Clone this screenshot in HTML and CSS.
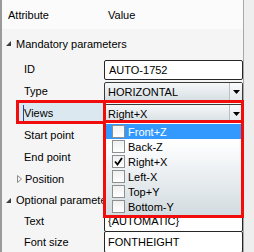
FILE: index.html
```html
<!DOCTYPE html>
<html>
<head>
<meta charset="utf-8">
<link rel="stylesheet" href="styles.css">
</head>
<body>
<div class="grid">
  <div class="hdr"><div class="hc1">Attribute</div><div class="hc2">Value</div></div>
  <div class="group g1"><svg class="exp" width="5" height="5" viewBox="0 0 5 5"><polygon points="5,0 5,5 0,5" fill="#3c3c3c"/></svg><span>Mandatory parameters</span></div>
  <div class="row"><div class="lbl"><div class="lbl-in">ID</div></div><div class="val"><div class="box">AUTO-1752</div></div></div>
  <div class="row"><div class="lbl"><div class="lbl-in">Type</div></div><div class="val"><div class="combo"><span class="ctext">HORIZONTAL</span><span class="cbtn"><svg width="7" height="4" viewBox="0 0 7 4"><polygon points="0,0 7,0 3.5,4" fill="#000"/></svg></span></div></div></div>
  <div class="row sel"><div class="lbl"><div class="lbl-in"><span class="caret">Views</span></div></div><div class="val"><div class="combo"><span class="ctext">Right+X</span><span class="cbtn"><svg width="7" height="4" viewBox="0 0 7 4"><polygon points="0,0 7,0 3.5,4" fill="#000"/></svg></span></div></div></div>
  <div class="row"><div class="lbl"><div class="lbl-in">Start point</div></div><div class="val"></div></div>
  <div class="row"><div class="lbl"><div class="lbl-in">End point</div></div><div class="val"></div></div>
  <div class="row"><div class="lbl"><div class="lbl-in sub"><svg class="exp2" width="5" height="8" viewBox="0 0 5 8"><polygon points="0.5,0.5 4.5,4 0.5,7.5" fill="none" stroke="#8a8a8a" stroke-width="1"/></svg>Position</div></div><div class="val"></div></div>
  <div class="group g2"><svg class="exp" width="5" height="5" viewBox="0 0 5 5"><polygon points="5,0 5,5 0,5" fill="#3c3c3c"/></svg><span>Optional parameters</span></div>
  <div class="row r21"><div class="lbl"><div class="lbl-in">Text</div></div><div class="val"><div class="box tall">{AUTOMATIC}</div></div></div>
  <div class="row r21"><div class="lbl"><div class="lbl-in">Font size</div></div><div class="val"><div class="box tall">FONTHEIGHT</div></div></div>

  <div class="mark mark-lbl"></div>
  <div class="mark mark-val"></div>
  <div class="dropdown">
    <div class="item hi"><span class="cb"></span>Front+Z</div>
    <div class="item"><span class="cb"></span>Back-Z</div>
    <div class="item"><span class="cb"><svg width="11" height="11" viewBox="0 0 11 11"><polyline points="2,5.5 4.5,8.5 9,2" fill="none" stroke="#000" stroke-width="1.8"/></svg></span>Right+X</div>
    <div class="item"><span class="cb"></span>Left-X</div>
    <div class="item"><span class="cb"></span>Top+Y</div>
    <div class="item"><span class="cb"></span>Bottom-Y</div>
  </div>
</div>
</body>
</html>
```
FILE: styles.css
```css
* { box-sizing: border-box; }
html, body { margin: 0; padding: 0; }
body {
  background: #eeeeee;
  width: 254px;
  height: 252px;
  overflow: hidden;
  font-family: "Liberation Sans", Arial, sans-serif;
  font-size: 11px;
  color: #000;
}
.grid {
  position: relative;
  width: 244px;
  height: 252px;
  background: #f5f5f5;
  border-left: 2px solid #9a9a9a;
  border-right: 1px solid #a8a8a8;
}
.hdr {
  display: flex;
  height: 29px;
  align-items: center;
  background: #fbfbfb;
}
.hc1 { width: 102px; padding-left: 6px; }
.hc2 { padding-left: 4px; }
.group {
  display: flex;
  align-items: center;
  padding-left: 4px;
  white-space: nowrap;
}
.g1 { height: 29px; }
.g2 { height: 20px; }
.group .exp { margin-right: 5px; }
.row { display: flex; height: 22px; }
.row.r21 { height: 21px; }
.lbl { width: 102px; padding-left: 14px; display: flex; }
.lbl-in {
  flex: 1;
  display: flex;
  align-items: center;
  padding-left: 8px;
  white-space: nowrap;
}
.lbl-in.sub { padding-left: 1px; }
.exp2 { margin-right: 3px; }
.sel .lbl-in { background: #dce8ef; }
.caret {
  border-left: 1px solid #24468c;
  height: 16px;
  line-height: 16px;
  margin-left: -1px;
}
.val { width: 139px; padding-top: 2px; }
.r21 .val { padding-top: 0; }
.box {
  height: 20px;
  background: #fff;
  border: 1px solid #262626;
  border-radius: 2px;
  padding-left: 4px;
  line-height: 18px;
  white-space: nowrap;
}
.box.tall { height: 22px; line-height: 20px; padding-left: 3px; }
.combo {
  height: 20px;
  display: flex;
  border: 1px solid #3a3a3a;
  border-radius: 2px;
  background: linear-gradient(#f5f7f8, #d6dee2);
}
.ctext { flex: 1; padding-left: 3px; line-height: 18px; }
.cbtn {
  width: 13px;
  border-left: 1px solid #b8c0c5;
  display: flex;
  align-items: center;
  justify-content: center;
  background: linear-gradient(#fafbfb, #e3e8eb);
}
.mark {
  position: absolute;
  border: 3px solid #f20d0d;
}
.mark-lbl { left: 14px; top: 100px; width: 90px; height: 24px; }
.mark-val { left: 101px; top: 100px; width: 141px; height: 23px; }
.dropdown {
  position: absolute;
  left: 101px;
  top: 120px;
  width: 141px;
  height: 98px;
  border: 3px solid #f20d0d;
  background: linear-gradient(#ffffff 20%, #d2dbe0);
  padding-top: 1px;
}
.item {
  display: flex;
  align-items: center;
  height: 15px;
  padding-left: 6px;
  white-space: nowrap;
}
.item.hi { background: #3399ff; color: #fff; }
.cb {
  width: 13px;
  height: 13px;
  border: 1px solid #8e8f8f;
  background: linear-gradient(#f0f0f0, #ffffff);
  margin-right: 3px;
  display: flex;
  align-items: center;
  justify-content: center;
}
```
